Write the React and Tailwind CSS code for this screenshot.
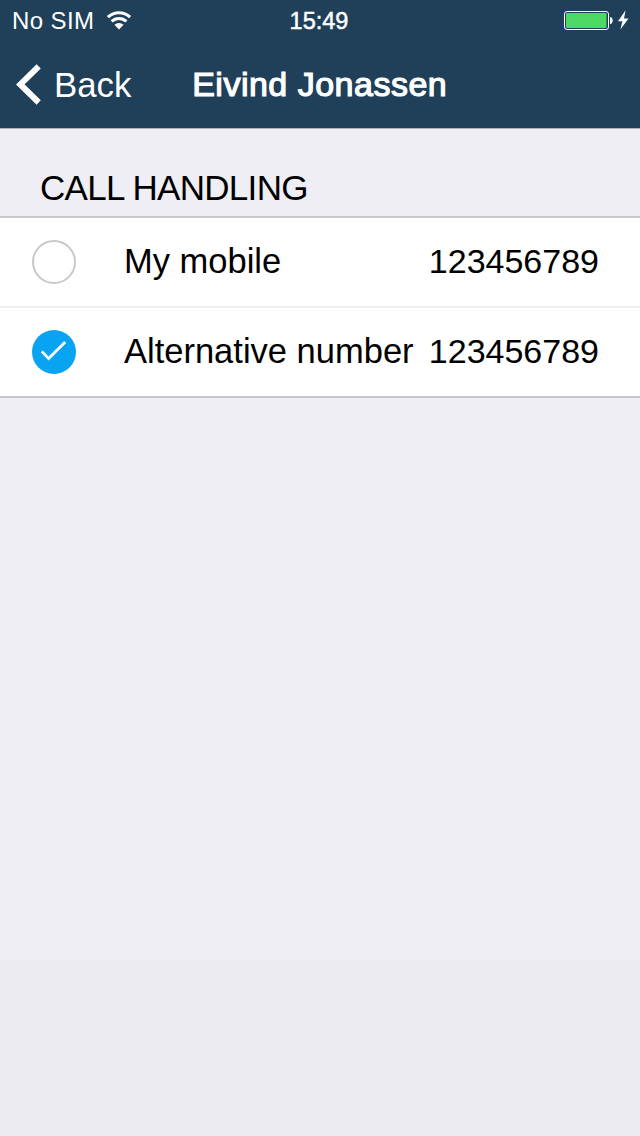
import React from 'react';

const contacts = [
    { label: 'My mobile', number: '123456789', selected: false },
    { label: 'Alternative number', number: '123456789', selected: true },
];

const WifiIcon = () => (
    <svg className="mb-0.5 ml-[11.5px] h-[20px] w-[26px]" viewBox="0 0 26 20" fill="none" stroke="white" strokeWidth="3.1">
        <path d="M1.9 7.2a16.2 16.2 0 0 1 22.2 0" />
        <path d="M5.6 11.4a10.8 10.8 0 0 1 14.8 0" />
        <path d="M13 19.4l-4.6-4.6a6.6 6.6 0 0 1 9.2 0z" fill="white" stroke="none" />
    </svg>
);

const BatteryIcon = () => (
    <svg className="h-[20px] w-[65px]" viewBox="0 0 65 20" fill="none">
        <rect x="0.5" y="1.5" width="44" height="18" rx="2.5" stroke="white" />
        <rect x="2" y="3" width="40.5" height="15" rx="1" fill="#4cd964" />
        <path d="M46 7c3.6 0 3.6 7 0 7z" fill="white" />
        <path d="M61.6 0.3L54 11.2h4.4l-2 8.4L64.5 8.4H60z" fill="white" />
    </svg>
);

const StatusBar = () => (
    <div className="grid h-10 grid-cols-3 items-center pl-3 pr-[11px] text-[24px] text-white">
        <div className="flex items-center pt-px">
            <span className="tracking-[0.4px]">No SIM</span>
            <WifiIcon />
        </div>
        <span className="pr-[3px] pt-[3px] text-center text-[23.5px] [-webkit-text-stroke:0.5px_white]">15:49</span>
        <div className="flex justify-end">
            <BatteryIcon />
        </div>
    </div>
);

const NumberRow = ({ label, number, selected }) => (
    <div className="box-content flex h-[88px] items-center">
        {selected ? (
            <span className="ml-8 flex size-11 items-center justify-center rounded-full bg-[#08a4f1]">
                <svg className="size-11" viewBox="0 0 44 44" fill="none" stroke="white" strokeWidth="2.8">
                    <path d="M9.8 21.4l6.8 7.2L33.2 12" />
                </svg>
            </span>
        ) : (
            <span className="ml-8 size-11 rounded-full border-2 border-[#c7c7cc]" />
        )}
        <span className="ml-12 text-[34.5px]">{label}</span>
        <span className="ml-auto mr-[41px] pb-0.5 text-[34px]">{number}</span>
    </div>
);

const App = () => (
    <div className="flex h-[1136px] w-[640px] flex-col bg-[#efeef4] font-['Liberation_Sans',sans-serif] text-black">
        <header className="h-[129px] border-b border-[#b2b2b2] bg-[#203f59] text-white">
            <StatusBar />
            <div className="flex h-[88px] items-center pl-4">
                <svg className="h-[42px] w-[26px]" viewBox="0 0 26 42" fill="none" stroke="white" strokeWidth="6">
                    <path d="M22.7 3.3L4.3 21.4l18.4 18.1" />
                </svg>
                <span className="ml-3 pt-0.5 text-[34.8px]">Back</span>
                <h1 className="ml-[60.8px] text-[34px] tracking-[0.5px] [-webkit-text-stroke:1.2px_white]">Eivind Jonassen</h1>
            </div>
        </header>

        <h2 className="h-[87px] pl-10 pt-[33px] text-[35px] tracking-[-0.7px]">CALL HANDLING</h2>

        <div className="divide-y-2 divide-[#efeef4] border-y-2 border-[#c8c7cc] bg-white">
            {contacts.map((contact) => (
                <NumberRow key={contact.label} {...contact} />
            ))}
        </div>

        <div className="mt-auto h-[176px] bg-[#ebeaf0]" />
    </div>
);

export default App;
